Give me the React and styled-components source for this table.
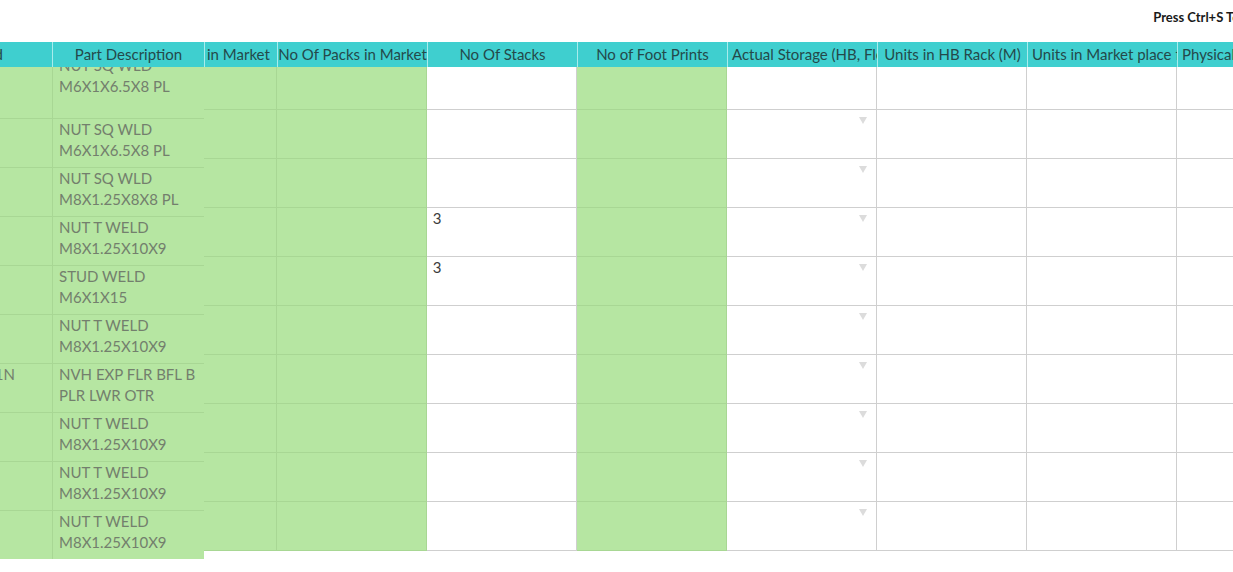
import React from "react";
import styled, { createGlobalStyle } from "styled-components";

const GlobalStyle = createGlobalStyle`
  html, body {
    margin: 0;
    padding: 0;
    background: #fff;
    overflow: hidden;
  }
  body {
    font-family: Lato, "Liberation Sans", sans-serif;
  }
`;

const GREEN = "#b6e6a2";
const TEAL = "#3fcfcf";

const Page = styled.div`
  width: 1320px;
  display: flex;
  flex-direction: column;
`;

const TopBar = styled.div`
  height: 42px;
  display: flex;
  align-items: flex-start;
  justify-content: flex-end;
  padding: 9px 50px 0 0;
  font-size: 13px;
  font-weight: 700;
  color: #1a1a1a;
  box-sizing: border-box;
`;

const HeaderRow = styled.div`
  display: flex;
  height: 25px;
  background: ${TEAL};
  position: relative;
  z-index: 2;
`;

const HeadCell = styled.div`
  flex: 0 0 ${(p) => p.w}px;
  box-sizing: border-box;
  border-right: 1px solid #a9ecec;
  display: flex;
  align-items: center;
  justify-content: ${(p) => p.justify || "center"};
  padding: ${(p) => p.pad || "0 4px"};
  padding-bottom: 1px;
  overflow: hidden;
  white-space: nowrap;
  font-size: 15px;
  color: #24494a;
`;

const Body = styled.div`
  display: flex;
  align-items: flex-start;
`;

const Pane = styled.div`
  overflow: hidden;
  height: ${(p) => p.h}px;
`;

const PaneInner = styled.div`
  margin-top: ${(p) => p.offset}px;
  display: flex;
  flex-direction: column;
`;

const Row = styled.div`
  display: flex;
  height: ${(p) => p.h || 49}px;
`;

const Cell = styled.div`
  flex: 0 0 ${(p) => p.w}px;
  box-sizing: border-box;
  position: relative;
  background: ${(p) => (p.green ? GREEN : "#fff")};
  border-right: 1px solid ${(p) => (p.green ? "#a8d794" : "#cfcfcf")};
  border-bottom: 1px solid ${(p) => (p.green ? "#a8d794" : "#cfcfcf")};
  padding: 0 6px;
  font-size: 15px;
  line-height: 21px;
  color: ${(p) => (p.green ? "#737f6d" : "#3c3c3c")};
  overflow: hidden;
  white-space: nowrap;
  display: ${(p) => (p.tail ? "flex" : "block")};
  justify-content: flex-end;
`;

const Tail = styled.span`
  padding-right: ${(p) => p.pr}px;
`;

const Line = styled.div`
  display: block;
`;

const Arrow = styled.span`
  position: absolute;
  right: 9px;
  top: 7px;
  width: 0;
  height: 0;
  border-left: 4px solid transparent;
  border-right: 4px solid transparent;
  border-top: 7px solid #dcdcdc;
`;

const parts = [
  ["", ["NUT SQ WLD", "M6X1X6.5X8 PL"]],
  ["", ["NUT SQ WLD", "M6X1X6.5X8 PL"]],
  ["", ["NUT SQ WLD", "M8X1.25X8X8 PL"]],
  ["", ["NUT T WELD", "M8X1.25X10X9"]],
  ["", ["STUD WELD", "M6X1X15"]],
  ["", ["NUT T WELD", "M8X1.25X10X9"]],
  ["23366281N", ["NVH EXP FLR BFL B", "PLR LWR OTR"]],
  ["", ["NUT T WELD", "M8X1.25X10X9"]],
  ["", ["NUT T WELD", "M8X1.25X10X9"]],
  ["", ["NUT T WELD", "M8X1.25X10X9"]],
];

const stacks = ["", "", "", "3", "3", "", "", "", "", ""];

const rightCols = [
  { w: 73, green: true },
  { w: 150, green: true },
  { w: 150, key: "stacks" },
  { w: 150, green: true },
  { w: 150, key: "storage" },
  { w: 150 },
  { w: 150 },
  { w: 150 },
];

export default function App() {
  return (
    <Page>
      <GlobalStyle />
      <TopBar>Press Ctrl+S To Save</TopBar>
      <HeaderRow>
        <HeadCell w={53} justify="flex-end" pad="0 49px 0 0">
          Part Id
        </HeadCell>
        <HeadCell w={152}>Part Description</HeadCell>
        <HeadCell w={73} justify="flex-start" pad="0 2px">
          in Market
        </HeadCell>
        <HeadCell w={150}>No Of Packs in Market</HeadCell>
        <HeadCell w={150}>No Of Stacks</HeadCell>
        <HeadCell w={150}>No of Foot Prints</HeadCell>
        <HeadCell w={150} justify="flex-start">
          Actual Storage (HB, Floor)
        </HeadCell>
        <HeadCell w={150}>Units in HB Rack (M)</HeadCell>
        <HeadCell w={150} justify="flex-start">
          Units in Market place for
        </HeadCell>
        <HeadCell w={150} justify="flex-start">
          Physical Units
        </HeadCell>
      </HeaderRow>
      <Body>
        <Pane h={492}>
          <PaneInner offset={-12}>
            {parts.map(([id, desc], i) => (
              <Row key={i} h={i === 0 ? 64 : 49}>
                <Cell w={53} green tail>
                  <Tail pr={31}>{id}</Tail>
                </Cell>
                <Cell w={152} green>
                  <Line>{desc[0]}</Line>
                  <Line>{desc[1]}</Line>
                </Cell>
              </Row>
            ))}
          </PaneInner>
        </Pane>
        <Pane h={484}>
          <PaneInner offset={-6}>
            {stacks.map((s, i) => (
              <Row key={i}>
                {rightCols.map((c, j) => (
                  <Cell key={j} w={c.w} green={c.green}>
                    {c.key === "stacks" ? s : null}
                    {c.key === "storage" && i > 0 ? <Arrow /> : null}
                  </Cell>
                ))}
              </Row>
            ))}
          </PaneInner>
        </Pane>
      </Body>
    </Page>
  );
}
